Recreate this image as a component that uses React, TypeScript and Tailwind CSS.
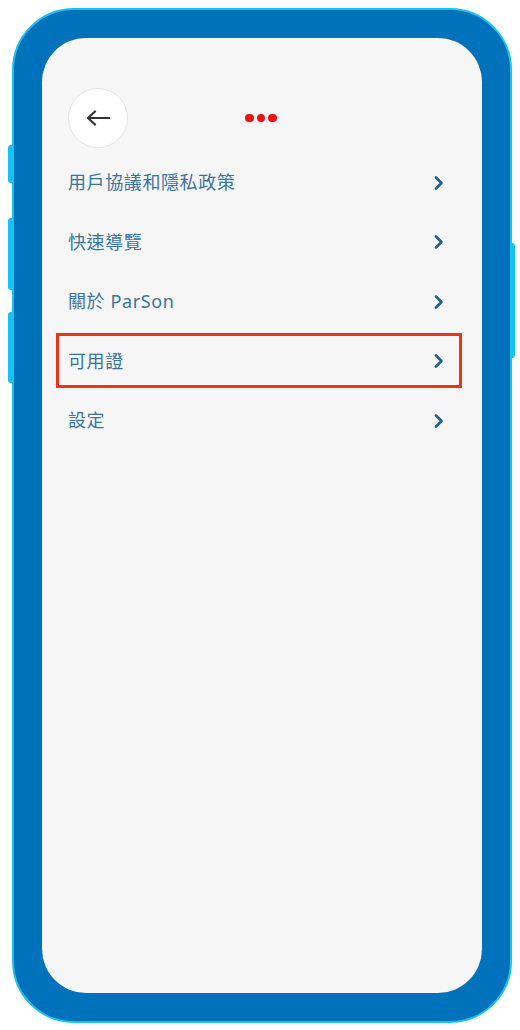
import React from "react";

const items = ["用戶協議和隱私政策", "快速導覽", "關於 ParSon", "可用證", "設定"];

function Chevron() {
  return (
    <svg width="12" height="16" viewBox="0 0 12 16" fill="none">
      <path d="M3 2.5 L8.5 8 L3 13.5" stroke="#1f5f92" strokeWidth="2.6" strokeLinecap="round" strokeLinejoin="round" />
    </svg>
  );
}

export default function App() {
  return (
    <div className="relative w-[520px] h-[1030px] bg-white" style={{ fontFamily: '"Noto Sans", "Noto Sans CJK TC", sans-serif' }}>
      {/* side buttons */}
      <div className="absolute left-[8px] top-[145px] w-[6px] h-[38px] rounded-l-[3px] bg-[#16c0f0]" />
      <div className="absolute left-[8px] top-[218px] w-[6px] h-[72px] rounded-l-[3px] bg-[#16c0f0]" />
      <div className="absolute left-[8px] top-[312px] w-[6px] h-[71px] rounded-l-[3px] bg-[#16c0f0]" />
      <div className="absolute left-[508px] top-[243px] w-[7px] h-[115px] rounded-r-[3px] bg-[#16c0f0]" />

      <div className="pl-[12px] pr-[8px] pt-[8px]">
        <div className="relative h-[1015px] rounded-[62px] border-2 border-[#18c3f2] bg-[#0072bc] p-[28px]">
          <div className="h-full rounded-[44px] bg-[#f6f6f6] pt-[50px]">
            {/* header */}
            <div className="flex items-center pl-[26px]">
              <div className="w-[60px] h-[60px] rounded-full bg-white border border-[#e4e4e4] flex items-center justify-center">
                <svg width="24" height="16" viewBox="0 0 24 16" fill="none">
                  <path d="M23 8 H2 M9 1.5 L2 8 L9 14.5" stroke="#333" strokeWidth="2.2" strokeLinecap="round" strokeLinejoin="round" />
                </svg>
              </div>
              <div className="ml-[117px] flex gap-[3px]">
                <span className="w-[8.5px] h-[8.5px] rounded-full bg-[#ee1111]" />
                <span className="w-[8.5px] h-[8.5px] rounded-full bg-[#ee1111]" />
                <span className="w-[8.5px] h-[8.5px] rounded-full bg-[#ee1111]" />
              </div>
            </div>
            {/* list */}
            <div className="mt-[5px] pl-[26px] pr-[37px]">
              {items.map((t, i) => (
                <div key={t} className="relative flex items-center justify-between h-[59.5px]">
                  <span className="text-[18px] text-[#3b73a0] tracking-[0.6px]" style={{ fontFamily: '"Noto Sans", "Noto Sans CJK TC", sans-serif' }}>{t}</span>
                  <Chevron />
                  {i === 3 && (
                    <div className="absolute left-[-12px] right-[-17px] top-[1px] bottom-[3px] border-[3px] border-[#ec3418]" />
                  )}
                </div>
              ))}
            </div>
          </div>
        </div>
      </div>
    </div>
  );
}
